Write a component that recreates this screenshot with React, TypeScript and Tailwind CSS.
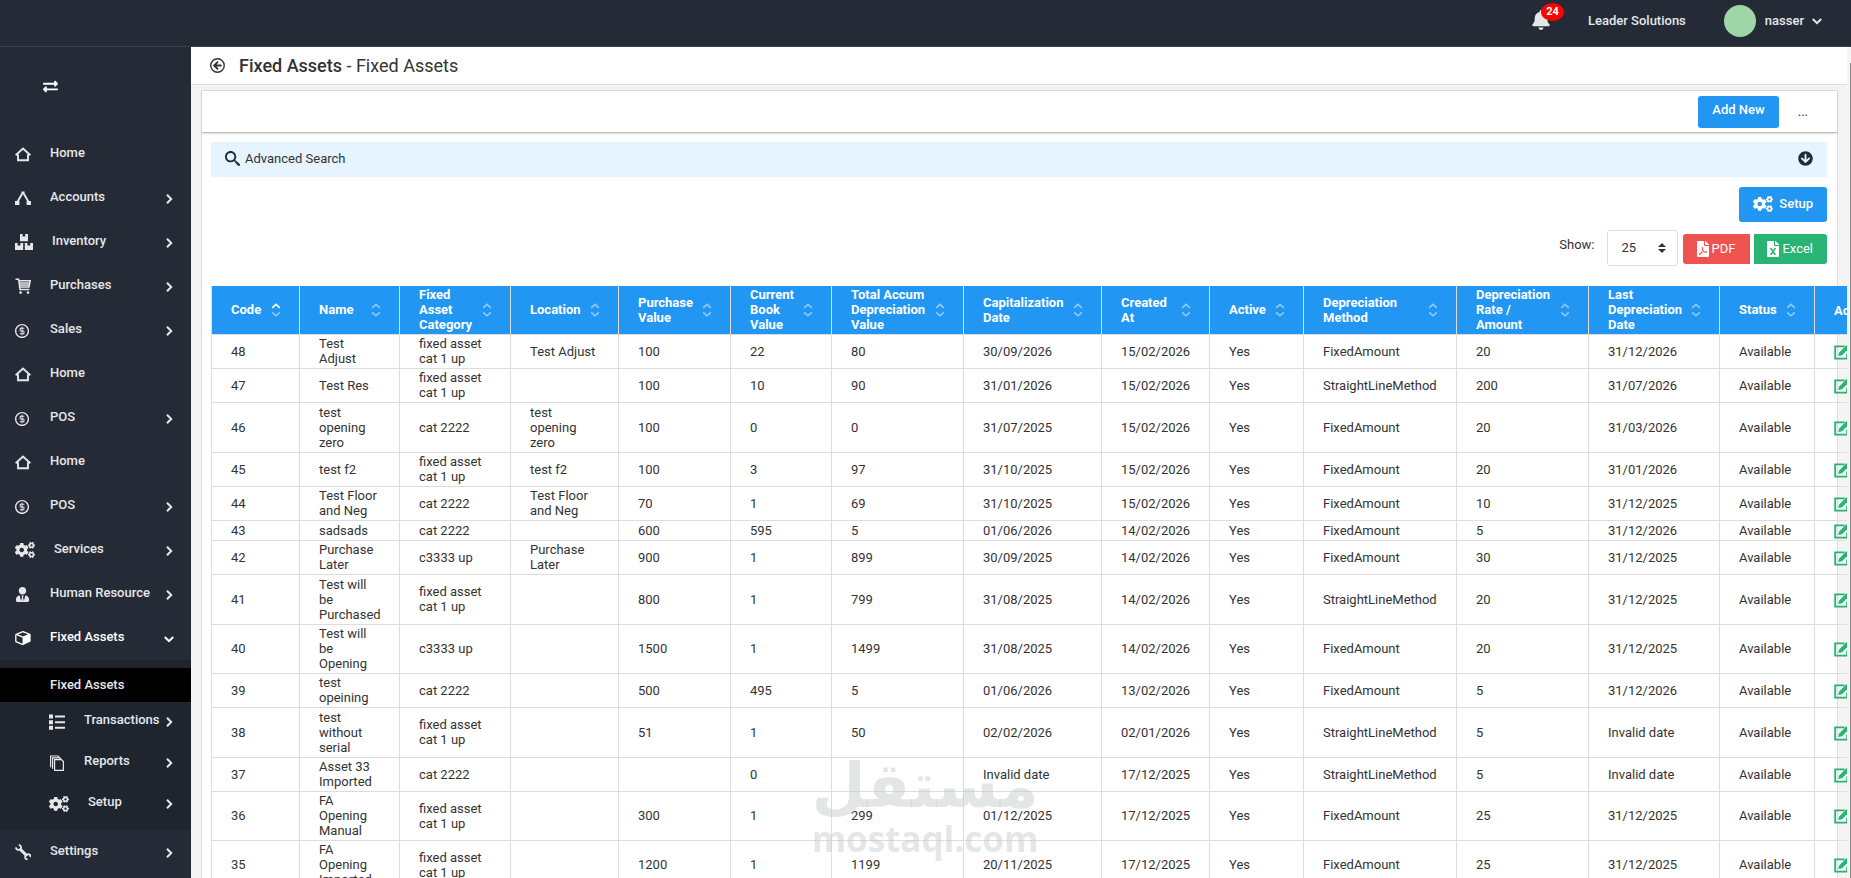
import type { ReactNode } from "react";
import { FaExchangeAlt, FaCogs, FaArrowCircleDown, FaBell, FaFilePdf, FaFileExcel, FaUserTie } from "react-icons/fa";
import { ImCoinDollar, ImSearch } from "react-icons/im";

const HomeIcon = () => (
  <svg viewBox="0 0 16 16" className="w-4 h-4" fill="none" stroke="currentColor" strokeWidth="1.9">
    <path d="M0.6 9.2 L8 2.6 L15.4 9.2" />
    <path d="M3 8.2 V14.2 H13 V8.2" />
  </svg>
);

const TreeIcon = () => (
  <svg viewBox="0 0 16 16" className="w-4 h-4" fill="currentColor">
    <path d="M6.4 1.5 h3.2 v3 h-3.2z M0 11 h4.4 v4 h-4.4z M11.6 11 h4.4 v4 h-4.4z" />
    <path d="M7 4 L2.4 12 M9 4 L13.6 12" stroke="currentColor" strokeWidth="1.9" />
  </svg>
);

const BoxesIcon = () => (
  <svg viewBox="0 0 18 16" className="w-[18px] h-4" fill="currentColor">
    <path d="M5 0 h2.6 v2.6 h2.6 V0 H13 v7.2 H5z M0 9 h2.6 v2.6 h2.8 V9 H8.2 v7 H0z M9.8 9 h2.6 v2.6 h2.8 V9 H18 v7 H9.8z" />
  </svg>
);

const CartIcon = () => (
  <svg viewBox="0 0 16 16" className="w-4 h-4" fill="none" stroke="currentColor" strokeWidth="1.5">
    <path d="M0.5 1.2 H3.6 L5 11.6 H14.4 M4 2.8 H15.2 L14 8.9 H4.8 M4.2 5 H14.6 M4.5 7 H14.4" />
    <circle cx="5.6" cy="14.6" r="1.3" fill="currentColor" stroke="none" />
    <circle cx="13" cy="14.6" r="1.3" fill="currentColor" stroke="none" />
  </svg>
);

const CubeIcon = () => (
  <svg viewBox="0 0 16 16" className="w-4 h-4" fill="currentColor">
    <path d="M8 1.6 L14.8 4.4 L8 7.2 L1.2 4.4z M0.8 4.6 V11.6 L8 14.6" fill="none" stroke="currentColor" strokeWidth="1.3" strokeLinejoin="round" />
    <path d="M7.6 7.2 L15.6 4.2 V11.6 L7.6 15.2z" />
  </svg>
);

const ListIcon = () => (
  <svg viewBox="0 0 16 16" className="w-4 h-4" fill="currentColor">
    <path d="M0 0.6 h4 v4 H0z M0 6.2 h4 v4 H0z M0 11.8 h4 v4 H0z M6 1.6 h10 v2 H6z M6 7.2 h10 v2 H6z M6 12.8 h10 v2 H6z" />
  </svg>
);

const PagesIcon = () => (
  <svg viewBox="0 0 16 16" className="w-4 h-4" fill="none" stroke="currentColor" strokeWidth="1.2">
    <path d="M5.6 4.6 H12.4 L14.4 6.6 V15.4 H5.6z" />
    <path d="M3.6 13.8 V2.8 H10.8 L12.4 4.4 M1.6 12.2 V1 H9 L10.6 2.6" />
  </svg>
);

const WrenchIcon = () => (
  <svg viewBox="0 0 16 16" className="w-4 h-4" fill="none" stroke="currentColor">
    <path d="M4.6 4.6 L12 12" strokeWidth="3" />
    <path d="M0.8 3.4 A2.8 2.8 0 0 0 5.8 4.8 A2.8 2.8 0 0 0 3.8 0.8" strokeWidth="1.8" />
    <path d="M15.4 13.2 A2.4 2.4 0 0 0 11 11.4 A2.4 2.4 0 0 0 12.8 15.6" strokeWidth="1.8" />
  </svg>
);

const BackIcon = () => (
  <svg viewBox="0 0 16 16" className="w-[15px] h-[15px]" fill="none" stroke="currentColor" strokeWidth="1.5">
    <circle cx="8" cy="8" r="7.2" />
    <path d="M8.6 3.8 L4.4 8 L8.6 12.2 M4.6 8 H12.4" strokeWidth="2" />
  </svg>
);

const EditIcon = () => (
  <svg viewBox="0 0 16 16" className="w-4 h-4" fill="none" stroke="currentColor" strokeWidth="1.9">
    <path d="M10.6 2.4 H1.2 V14.6 H13.2 V9.4" />
    <path d="M4.2 12 L5.2 8.4 L12.6 1 L15.4 3.8 L8 11.2z" fill="currentColor" stroke="none" />
  </svg>
);

const ArrowRight = () => (
  <svg viewBox="0 0 10 10" className="w-2.5 h-2.5" fill="none" stroke="currentColor" strokeWidth="2">
    <path d="M3 0.8 L7.2 5 L3 9.2" />
  </svg>
);

const ArrowDown = () => (
  <svg viewBox="0 0 10 10" className="w-2.5 h-2.5" fill="none" stroke="currentColor" strokeWidth="2">
    <path d="M0.8 3 L5 7.2 L9.2 3" />
  </svg>
);

function SortIcon({ sorted }: { sorted: boolean }) {
  return (
    <svg viewBox="0 0 10 14" className="w-2.5 h-3.5 shrink-0" fill="none" stroke="currentColor" strokeWidth="1.6">
      <path d="M1.2 4.8 L5 1.4 L8.8 4.8" opacity={sorted ? 1 : 0.5} />
      <path d="M1.2 9.4 L5 12.8 L8.8 9.4" opacity="0.5" />
    </svg>
  );
}

type MenuItem = { label: string; icon: ReactNode; arrow?: boolean; open?: boolean };

const menu: MenuItem[] = [
  { label: "Home", icon: <HomeIcon /> },
  { label: "Accounts", icon: <TreeIcon />, arrow: true },
  { label: "Inventory", icon: <BoxesIcon />, arrow: true },
  { label: "Purchases", icon: <CartIcon />, arrow: true },
  { label: "Sales", icon: <ImCoinDollar className="w-[15px] h-[15px]" stroke="currentColor" />, arrow: true },
  { label: "Home", icon: <HomeIcon /> },
  { label: "POS", icon: <ImCoinDollar className="w-[15px] h-[15px]" stroke="currentColor" />, arrow: true },
  { label: "Home", icon: <HomeIcon /> },
  { label: "POS", icon: <ImCoinDollar className="w-[15px] h-[15px]" stroke="currentColor" />, arrow: true },
  { label: "Services", icon: <FaCogs className="w-5 h-4" />, arrow: true },
  { label: "Human Resource", icon: <FaUserTie className="w-[15px] h-[15px]" />, arrow: true },
  { label: "Fixed Assets", icon: <CubeIcon />, arrow: true, open: true },
];

const subMenu: MenuItem[] = [
  { label: "Transactions", icon: <ListIcon />, arrow: true },
  { label: "Reports", icon: <PagesIcon />, arrow: true },
  { label: "Setup", icon: <FaCogs className="w-5 h-4" />, arrow: true },
];

const columns = [
  { title: "Code", width: "w-[88px]" },
  { title: "Name", width: "w-[100px]" },
  { title: "Fixed\nAsset\nCategory", width: "w-[111px]" },
  { title: "Location", width: "w-[108px]" },
  { title: "Purchase\nValue", width: "w-[112px]" },
  { title: "Current\nBook\nValue", width: "w-[101px]" },
  { title: "Total Accum\nDepreciation\nValue", width: "w-[132px]" },
  { title: "Capitalization\nDate", width: "w-[138px]" },
  { title: "Created\nAt", width: "w-[108px]" },
  { title: "Active", width: "w-[94px]" },
  { title: "Depreciation\nMethod", width: "w-[153px]" },
  { title: "Depreciation\nRate /\nAmount", width: "w-[132px]" },
  { title: "Last\nDepreciation\nDate", width: "w-[131px]" },
  { title: "Status", width: "w-[95px]" },
];

const cat1 = "fixed asset\ncat 1 up";

const rows = [
  { tall: false, cells: ["48", "Test\nAdjust", cat1, "Test Adjust", "100", "22", "80", "30/09/2026", "15/02/2026", "Yes", "FixedAmount", "20", "31/12/2026", "Available"] },
  { tall: false, cells: ["47", "Test Res", cat1, "", "100", "10", "90", "31/01/2026", "15/02/2026", "Yes", "StraightLineMethod", "200", "31/07/2026", "Available"] },
  { tall: true, cells: ["46", "test\nopening\nzero", "cat 2222", "test\nopening\nzero", "100", "0", "0", "31/07/2025", "15/02/2026", "Yes", "FixedAmount", "20", "31/03/2026", "Available"] },
  { tall: false, cells: ["45", "test f2", cat1, "test f2", "100", "3", "97", "31/10/2025", "15/02/2026", "Yes", "FixedAmount", "20", "31/01/2026", "Available"] },
  { tall: false, cells: ["44", "Test Floor\nand Neg", "cat 2222", "Test Floor\nand Neg", "70", "1", "69", "31/10/2025", "15/02/2026", "Yes", "FixedAmount", "10", "31/12/2025", "Available"] },
  { tall: false, cells: ["43", "sadsads", "cat 2222", "", "600", "595", "5", "01/06/2026", "14/02/2026", "Yes", "FixedAmount", "5", "31/12/2026", "Available"] },
  { tall: false, cells: ["42", "Purchase\nLater", "c3333 up", "Purchase\nLater", "900", "1", "899", "30/09/2025", "14/02/2026", "Yes", "FixedAmount", "30", "31/12/2025", "Available"] },
  { tall: true, cells: ["41", "Test will\nbe\nPurchased", cat1, "", "800", "1", "799", "31/08/2025", "14/02/2026", "Yes", "StraightLineMethod", "20", "31/12/2025", "Available"] },
  { tall: false, cells: ["40", "Test will\nbe\nOpening", "c3333 up", "", "1500", "1", "1499", "31/08/2025", "14/02/2026", "Yes", "FixedAmount", "20", "31/12/2025", "Available"] },
  { tall: false, cells: ["39", "test\nopeining", "cat 2222", "", "500", "495", "5", "01/06/2026", "13/02/2026", "Yes", "FixedAmount", "5", "31/12/2026", "Available"] },
  { tall: true, cells: ["38", "test\nwithout\nserial", cat1, "", "51", "1", "50", "02/02/2026", "02/01/2026", "Yes", "StraightLineMethod", "5", "Invalid date", "Available"] },
  { tall: false, cells: ["37", "Asset 33\nImported", "cat 2222", "", "", "0", "", "Invalid date", "17/12/2025", "Yes", "StraightLineMethod", "5", "Invalid date", "Available"] },
  { tall: false, cells: ["36", "FA\nOpening\nManual", cat1, "", "300", "1", "299", "01/12/2025", "17/12/2025", "Yes", "FixedAmount", "25", "31/12/2025", "Available"] },
  { tall: false, cells: ["35", "FA\nOpening\nImported", cat1, "", "1200", "1", "1199", "20/11/2025", "17/12/2025", "Yes", "FixedAmount", "25", "31/12/2025", "Available"] },
];

function SideLink({ item, sub = false }: { item: MenuItem; sub?: boolean }) {
  return (
    <a
      href="#"
      className={`flex items-center pr-[17px] ${sub ? "h-[41px] pl-[49px] pb-0.5" : "h-11 pl-[15px]"} ${item.open ? "text-white" : "text-[#e6e7e9]"}`}
    >
      <span className="mr-[19px] min-w-4 shrink-0">{item.icon}</span>
      <span className="pb-[3px] flex-1 whitespace-nowrap">{item.label}</span>
      {item.arrow && (
        <span className="mt-px shrink-0">{item.open ? <ArrowDown /> : <ArrowRight />}</span>
      )}
    </a>
  );
}

export default function App() {
  return (
    <div className="h-screen flex flex-col overflow-hidden bg-[#f4f4f4] text-[#333] text-[13px] leading-5 font-['Roboto',sans-serif]">
      <header className="h-[47px] shrink-0 flex items-center justify-end bg-[#252b36] border-b border-[#3b414b] text-[#e6e7e9] font-medium pr-[29px] pb-1">
        <button className="relative mr-[37px] mb-0.5" aria-label="Notifications">
          <FaBell className="w-5 h-5" />
          <span className="absolute -top-[7px] left-2.5 w-[23px] h-[18px] rounded-[50%] bg-[#f00] text-white text-[11px] leading-[18px] font-bold text-center">24</span>
        </button>
        <span className="mr-[38px]">Leader Solutions</span>
        <button className="flex items-center">
          <span className="w-8 h-8 rounded-full bg-[#9fd6a6] mr-[9px]" />
          <span className="mr-2">nasser</span>
          <ArrowDown />
        </button>
      </header>

      <div className="flex flex-1 min-h-0">
        <nav className="w-[191px] shrink-0 bg-[#252b36] font-medium overflow-hidden">
          <div className="h-[85px] pt-8 pl-[43px]">
            <button className="block text-white" aria-label="Toggle sidebar">
              <FaExchangeAlt className="w-[15px] h-[15px]" />
            </button>
          </div>
          {menu.map((item, i) => (
            <SideLink key={i} item={item} />
          ))}
          <div className="bg-[#1f252f] pt-2 pb-[5px]">
            <a href="#" className="flex items-center h-[34px] pl-[50px] bg-black text-[#e6e7e9]">Fixed Assets</a>
            {subMenu.map((item) => (
              <SideLink key={item.label} item={item} sub />
            ))}
          </div>
          <SideLink item={{ label: "Settings", icon: <WrenchIcon />, arrow: true }} />
        </nav>

        <main className="flex-1 min-w-0 flex flex-col overflow-hidden">
          <div className="h-[38px] shrink-0 flex items-center bg-white border-b border-[#ddd] pl-[19px]">
            <button aria-label="Back">
              <BackIcon />
            </button>
            <h1 className="ml-3.5 text-lg leading-6">
              <span className="font-medium">Fixed Assets</span> - Fixed Assets
            </h1>
          </div>

          <section className="mt-[5px] ml-2.5 mr-[9px] flex-1 bg-white border border-[#ddd]">
            <div className="h-[42px] flex items-center justify-end border-b border-[#bbb] shadow-sm pr-[29px]">
              <button className="h-8 px-3.5 pb-1 rounded-[3px] bg-[#2196f3] text-white font-medium">Add New</button>
              <button className="ml-[19px]" aria-label="More">...</button>
            </div>

            <div className="pl-[9px] pr-2.5 pt-[9px]">
              <button className="w-full h-[35px] flex items-center px-3.5 pb-0.5 bg-[#e6f4ff]">
                <ImSearch className="w-[15px] h-[15px] text-[#252b36]" stroke="currentColor" />
                <span className="ml-[5px]">Advanced Search</span>
                <FaArrowCircleDown className="w-[15px] h-[15px] ml-auto text-[#252b36]" />
              </button>

              <div className="flex justify-end mt-2.5">
                <button className="h-[35px] px-3.5 pb-0.5 flex items-center rounded-[3px] bg-[#2196f3] text-white font-medium">
                  <FaCogs className="w-5 h-4 mr-1.5" />
                  Setup
                </button>
              </div>

              <div className="flex justify-end items-center mt-2">
                <label htmlFor="page-size" className="mr-3 pb-1.5">Show:</label>
                <div className="relative mr-[5px]">
                  <select id="page-size" defaultValue="25" className="appearance-none w-[71px] h-9 pl-3.5 rounded-[3px] border border-[#ddd] bg-white">
                    <option>10</option>
                    <option>25</option>
                    <option>50</option>
                    <option>100</option>
                  </select>
                  <svg viewBox="0 0 8 10" className="absolute right-3 top-[13px] w-2 h-2.5 pointer-events-none" fill="#333">
                    <path d="M4 0 L8 4 H0z M0 6 H8 L4 10z" />
                  </svg>
                </div>
                <button className="h-[30px] mt-0.5 pl-3.5 pr-[15px] flex items-center rounded-l-[3px] bg-[#ef5350] text-white mr-1">
                  <FaFilePdf className="w-3 h-4 mr-[3px]" />
                  PDF
                </button>
                <button className="h-[30px] mt-0.5 pl-[13px] pr-3.5 flex items-center rounded-r-[3px] bg-[#29b475] text-white">
                  <FaFileExcel className="w-3 h-4 mr-[3px]" />
                  Excel
                </button>
              </div>

              <table className="table-fixed border-collapse w-[1698px] mt-5 leading-[15px] text-left">
                <thead>
                  <tr className="h-12 bg-[#2196f3] text-white">
                    {columns.map((col, i) => (
                      <th key={i} className={`${col.width} border-x border-b border-[#ddd] pl-[19px] pr-[18px] pt-px pb-0.5 font-bold`}>
                        <div className="flex items-center justify-between">
                          <span className="whitespace-pre">{col.title}</span>
                          <SortIcon sorted={i === 0} />
                        </div>
                      </th>
                    ))}
                    <th className="border-x border-b border-[#ddd] pl-[19px] font-bold">Actions</th>
                  </tr>
                </thead>
                <tbody>
                  {rows.map((row) => (
                    <tr key={row.cells[0]} className={row.tall ? "h-[50px]" : "h-5"}>
                      {row.cells.map((cell, i) => (
                        <td key={i} className="border border-[#ddd] pl-[19px] pt-px pb-0.5 whitespace-pre">{cell}</td>
                      ))}
                      <td className="border border-[#ddd] pl-[19px] text-[#29b475]">
                        <button className="block" aria-label={`Edit asset ${row.cells[0]}`}>
                          <EditIcon />
                        </button>
                      </td>
                    </tr>
                  ))}
                </tbody>
              </table>
            </div>
          </section>
        </main>

        <div className="w-1 shrink-0 bg-[#f4f4f4] pt-4 pl-[3px]">
          <div className="h-full bg-[#8a8a8a]" />
        </div>
      </div>

      <div className="absolute left-[814px] top-[753px] w-[222px] flex flex-col items-center text-[#c4c7c7]/45 font-bold pointer-events-none select-none" aria-hidden="true">
        <div dir="rtl" className="text-[62px] leading-[66px] font-['DejaVu_Sans',sans-serif]">مستقل</div>
        <div className="text-[35px] leading-[40px] font-['Open_Sans',sans-serif]">mostaql.com</div>
      </div>
    </div>
  );
}
